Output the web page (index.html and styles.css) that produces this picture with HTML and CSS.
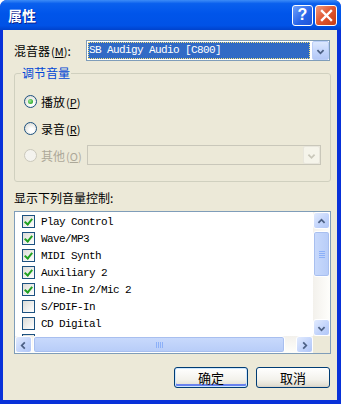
FILE: index.html
```html
<!DOCTYPE html>
<html lang="zh-CN">
<head>
    <meta charset="UTF-8">
    <title>属性</title>
    <link rel="stylesheet" href="styles.css">
</head>
<body>

<div class="window">
    <!-- Title bar -->
    <div class="titlebar">
        <span class="title">属性</span>
        <div class="cap-buttons">
            <span class="cap-btn help">?</span>
            <span class="cap-btn close">
                <svg width="13" height="13" viewBox="0 0 13 13"><path d="M2 2 L11 11 M11 2 L2 11" stroke="#fff" stroke-width="2.4" stroke-linecap="square"/></svg>
            </span>
        </div>
    </div>

    <div class="content">
        <!-- Mixer select -->
        <div class="mixer-row">
            <span class="label">混音器<span class="key">(<u>M</u>)</span>:</span>
            <div class="combo">
                <span class="combo-text selected">SB Audigy Audio [C800]</span>
                <span class="drop-btn">
                    <svg width="17" height="19" viewBox="0 0 17 19"><path d="M5 8 L8.5 11.5 L12 8" fill="none" stroke="#4D6185" stroke-width="2"/></svg>
                </span>
            </div>
        </div>

        <!-- Volume group -->
        <fieldset class="group">
            <legend>调节音量</legend>
            <div class="radio-row">
                <span class="radio checked"></span>
                <span>播放<span class="key">(<u>P</u>)</span></span>
            </div>
            <div class="radio-row">
                <span class="radio"></span>
                <span>录音<span class="key">(<u>R</u>)</span></span>
            </div>
            <div class="radio-row disabled">
                <span class="radio"></span>
                <span>其他<span class="key">(<u>O</u>)</span></span>
                <div class="combo combo-disabled">
                    <span class="combo-text"></span>
                    <span class="drop-btn">
                        <svg width="17" height="18" viewBox="0 0 17 18"><path d="M5 7.5 L8.5 11 L12 7.5" fill="none" stroke="#C9C7BA" stroke-width="2"/></svg>
                    </span>
                </div>
            </div>
        </fieldset>

        <div class="list-label">显示下列音量控制:</div>

        <!-- Controls list -->
        <div class="listbox">
            <div class="items">
                <div class="item"><span class="check on"></span>Play Control</div>
                <div class="item"><span class="check on"></span>Wave/MP3</div>
                <div class="item"><span class="check on"></span>MIDI Synth</div>
                <div class="item"><span class="check on"></span>Auxiliary 2</div>
                <div class="item"><span class="check on"></span>Line-In 2/Mic 2</div>
                <div class="item"><span class="check"></span>S/PDIF-In</div>
                <div class="item"><span class="check"></span>CD Digital</div>
                <div class="item"><span class="check"></span></div>
            </div>
            <div class="vscroll">
                <span class="sb-btn">
                    <svg width="17" height="17" viewBox="0 0 17 17"><path d="M5 10 L8.5 6.5 L12 10" fill="none" stroke="#4D6185" stroke-width="2"/></svg>
                </span>
                <span class="vthumb">
                    <svg width="8" height="8" viewBox="0 0 8 8"><path d="M1 1.5 H7 M1 3.5 H7 M1 5.5 H7 M1 7.5 H7" stroke="#8CB0F8" stroke-width="1"/></svg>
                </span>
                <span class="sb-btn">
                    <svg width="17" height="17" viewBox="0 0 17 17"><path d="M5 7 L8.5 10.5 L12 7" fill="none" stroke="#4D6185" stroke-width="2"/></svg>
                </span>
            </div>
            <div class="hscroll">
                <span class="sb-btn">
                    <svg width="17" height="17" viewBox="0 0 17 17"><path d="M10 5 L6.5 8.5 L10 12" fill="none" stroke="#4D6185" stroke-width="2"/></svg>
                </span>
                <span class="hthumb">
                    <svg width="8" height="8" viewBox="0 0 8 8"><path d="M1.5 1 V7 M3.5 1 V7 M5.5 1 V7 M7.5 1 V7" stroke="#8CB0F8" stroke-width="1"/></svg>
                </span>
                <span class="sb-btn">
                    <svg width="17" height="17" viewBox="0 0 17 17"><path d="M7 5 L10.5 8.5 L7 12" fill="none" stroke="#4D6185" stroke-width="2"/></svg>
                </span>
            </div>
            <div class="corner"></div>
        </div>

        <!-- Dialog buttons -->
        <div class="buttons">
            <button class="btn default">确定</button>
            <button class="btn">取消</button>
        </div>
    </div>
</div>

</body>
</html>
```

FILE: styles.css
```css
body {
    margin: 0;
    background: #fff;
    font-family: "Noto Sans CJK SC", "Noto Sans", sans-serif;
    font-size: 12px;
    color: #000;
}
.window {
    width: 341px;
    height: 404px;
    display: flex;
    flex-direction: column;
    background: #0831D9;
    border-radius: 7px 7px 0 0;
    overflow: hidden;
}
.titlebar {
    height: 30px;
    flex: none;
    display: flex;
    align-items: center;
    padding: 0 4px 0 8px;
    background: linear-gradient(#3D8CF7 0%, #0A60EE 12%, #0055EA 45%, #0052E6 85%, #0042CC 100%);
}
.title {
    flex: 1;
    color: #fff;
    font-weight: bold;
    font-size: 14px;
    text-shadow: 1px 1px #0A1E8C;
}
.cap-buttons {
    display: flex;
    gap: 2px;
}
.cap-btn {
    width: 21px;
    height: 21px;
    box-sizing: border-box;
    border: 1px solid #fff;
    border-radius: 3px;
    display: flex;
    align-items: center;
    justify-content: center;
}
.help {
    background: linear-gradient(135deg, #6FA0FB, #2663E8 60%, #1F55D8);
    color: #fff;
    font-family: "Liberation Sans", sans-serif;
    font-weight: bold;
    font-size: 16px;
}
.close {
    width: 22px;
    background: linear-gradient(135deg, #F09A7C, #E0552F 50%, #C63D14);
}
.content {
    flex: 1;
    margin: 0 4px 4px 3px;
    padding: 10px 6px 0 11px;
    background: #ECE9D8;
}
.key {
    font-size: 11px;
    margin-left: 1px;
}
.mixer-row {
    display: flex;
    align-items: center;
    height: 21px;
}
.combo {
    margin-left: auto;
    margin-right: 1px;
    width: 244px;
    height: 21px;
    box-sizing: border-box;
    border: 1px solid #7F9DB9;
    background: #fff;
    display: flex;
}
.combo-text {
    flex: 1;
    margin: 1px 2px 1px 1px;
    padding-left: 1px;
    font-family: "Liberation Mono", monospace;
    font-size: 11px;
    letter-spacing: -0.6px;
    line-height: 17px;
    white-space: nowrap;
}
.combo-text.selected {
    background: #316AC5;
    color: #fff;
    outline: 1px dotted #F4E27A;
    outline-offset: -1px;
}
.drop-btn {
    width: 17px;
    flex: none;
    box-sizing: border-box;
    border: 1px solid #BACEF8;
    border-radius: 2px;
    background: linear-gradient(#DCE8FE, #C1D3FB 60%, #B4C8F6);
    display: flex;
}
.group {
    margin: 5px 0 0;
    padding: 11px 9px 16px;
    border: 1px solid #D0D0BF;
    border-radius: 3px;
    min-width: 0;
}
.group legend {
    padding: 0 1px;
    margin-left: -3px;
    color: #0046D5;
    line-height: 14px;
}
.radio-row {
    display: flex;
    align-items: center;
    height: 20px;
    gap: 4px;
}
.radio-row + .radio-row {
    margin-top: 7px;
}
.radio {
    width: 13px;
    height: 13px;
    box-sizing: border-box;
    border: 1px solid #1C5180;
    border-radius: 50%;
    background: radial-gradient(circle at 60% 65%, #FFFFFF 20%, #E8E8E3 60%, #D6D5CC 100%);
    position: relative;
}
.radio.checked::after {
    content: "";
    position: absolute;
    left: 3px;
    top: 3px;
    width: 5px;
    height: 5px;
    border-radius: 50%;
    background: radial-gradient(circle at 40% 40%, #A2EB96, #21A121 80%);
}
.radio-row.disabled {
    color: #ACA899;
}
.radio-row.disabled .radio {
    border-color: #CAC8BB;
    background: #F4F3EE;
}
.combo-disabled {
    width: 234px;
    height: 20px;
    margin-right: 0;
    border-color: #C9C7BA;
    background: #ECE9D8;
}
.combo-disabled .drop-btn {
    border-color: #E8E6DC;
    background: #F5F4EA;
}
.list-label {
    margin-top: 9px;
    line-height: 14px;
}
.listbox {
    margin-top: 6px;
    height: 143px;
    box-sizing: border-box;
    border: 1px solid #7F9DB9;
    background: #fff;
    display: grid;
    grid-template-columns: 1fr 17px;
    grid-template-rows: 1fr 17px;
}
.items {
    overflow: hidden;
    padding-top: 1px;
}
.item {
    height: 17px;
    display: flex;
    align-items: center;
    gap: 6px;
    padding-left: 7px;
    font-family: "Liberation Mono", monospace;
    font-size: 11px;
    letter-spacing: -0.6px;
    white-space: nowrap;
}
.check {
    width: 13px;
    height: 13px;
    flex: none;
    box-sizing: border-box;
    border: 1px solid #1C5180;
    background: linear-gradient(135deg, #DCDCD7, #FFFFFF);
    display: flex;
    align-items: center;
    justify-content: center;
}
.check.on::after {
    content: "";
    width: 3px;
    height: 6px;
    margin-top: -2px;
    border: solid #21A121;
    border-width: 0 2px 2px 0;
    transform: rotate(40deg);
}
.vscroll {
    display: flex;
    flex-direction: column;
    background: linear-gradient(to right, #F3F1EC, #FEFEFB);
}
.vscroll .sb-btn:last-child {
    margin-top: auto;
}
.hscroll {
    display: flex;
    background: linear-gradient(#F3F1EC, #FEFEFB);
}
.hscroll .sb-btn:last-child {
    margin-left: auto;
}
.sb-btn {
    width: 17px;
    height: 17px;
    flex: none;
    box-sizing: border-box;
    border: 1px solid #fff;
    border-radius: 3px;
    background: linear-gradient(135deg, #E2EBFE, #C1D3FB 60%, #B1C6F6);
    display: flex;
}
.vthumb, .hthumb {
    box-sizing: border-box;
    border: 1px solid #fff;
    border-radius: 3px;
    background: linear-gradient(to right, #C9DAFC, #B7CCF8);
    display: flex;
    align-items: center;
    justify-content: center;
    box-shadow: inset 0 0 0 1px #A8BFEF;
}
.vthumb {
    height: 46px;
    margin-top: 2px;
}
.hthumb {
    width: 252px;
    margin-left: 1px;
    background: linear-gradient(#C9DAFC, #B7CCF8);
}
.corner {
    background: #ECE9D8;
}
.buttons {
    margin-top: 13px;
    padding-right: 1px;
    display: flex;
    justify-content: flex-end;
    gap: 8px;
}
.btn {
    width: 74px;
    height: 21px;
    padding: 0;
    border: 1px solid #003C74;
    border-radius: 3px;
    background: linear-gradient(#FFFFFF, #F3F2EC 60%, #E3E0D4 90%, #D6D0C5);
    font-family: "Noto Sans CJK SC", sans-serif;
    font-size: 13px;
    color: #000;
}
.btn.default {
    box-shadow: inset 0 0 0 1px #CEE7FF, inset 0 -2px 0 1px #6982EE;
}
```
